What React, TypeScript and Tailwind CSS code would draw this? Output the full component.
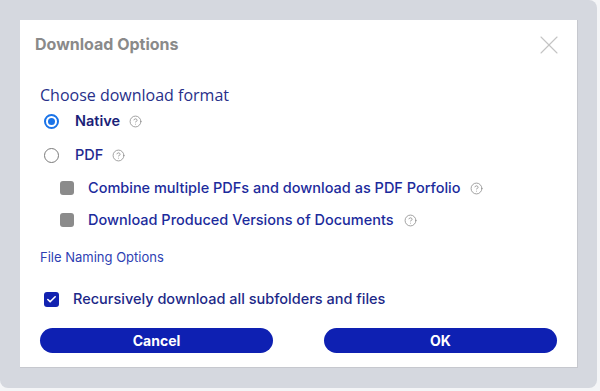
import { CircleHelp, X, Check } from 'lucide-react';

function Help({ className = '' }: { className?: string }) {
  return <CircleHelp size={13} strokeWidth={1.5} className={`text-[#8c8c8c] ${className}`} />;
}

export default function App() {
  return (
    <div className="w-[600px] h-[391px] bg-[#f4f5f7] font-['Inter',sans-serif]">
      <div className="w-[597px] h-[388px] bg-[#d5d8df] rounded-b-lg rounded-tr-lg p-[20px]">
        <div className="w-[558px] h-[348px] bg-white border-r border-b border-[#c6c8ce] flex flex-col">
          {/* header */}
          <div className="h-[48px] pl-[15px] pr-[12px] flex items-center justify-between">
            <h2 className="text-[16px] font-bold text-[#8a8a8a]">Download Options</h2>
            <X size={32} strokeWidth={0.8} className="text-[#c4c4c4] mt-[2px]" />
          </div>

          <div className="px-[20px] flex flex-col">
            <p className="mt-[18px] h-[18px] leading-[18px] text-[16px] text-[#28308a] font-['Open_Sans',sans-serif]">
              Choose download format
            </p>

            <div className="h-[34px] flex items-center pl-[4px]">
              <span className="w-[15px] h-[15px] rounded-full border-2 border-[#1a73e8] flex items-center justify-center">
                <span className="w-[7px] h-[7px] rounded-full bg-[#1a73e8]" />
              </span>
              <span className="ml-[16px] text-[14.5px] font-semibold text-[#1b1f78]">Native</span>
              <Help className="ml-[9px]" />
            </div>

            <div className="h-[34px] flex items-center pl-[4px]">
              <span className="w-[15px] h-[15px] rounded-full border border-[#7a7a7a] bg-white" />
              <span className="ml-[16px] text-[14.5px] font-medium text-[#1f2a90]">PDF</span>
              <Help className="ml-[9px]" />
            </div>

            <div className="h-[32px] flex items-center pl-[20px]">
              <span className="w-[14px] h-[14px] rounded-[3px] bg-[#8b8b8b]" />
              <span className="ml-[14px] text-[14.5px] font-medium text-[#1c2b9c]">
                Combine multiple PDFs and download as PDF Porfolio
              </span>
              <Help className="ml-[9px]" />
            </div>

            <div className="h-[32px] flex items-center pl-[20px]">
              <span className="w-[14px] h-[14px] rounded-[3px] bg-[#8b8b8b]" />
              <span className="ml-[14px] text-[14.5px] font-medium text-[#1c2b9c]">
                Download Produced Versions of Documents
              </span>
              <Help className="ml-[10px]" />
            </div>

            <a className="mt-[11px] h-[20px] leading-[20px] text-[13px] text-[#2f3fb3]">File Naming Options</a>

            <div className="mt-[20px] h-[24px] flex items-center pl-[4px]">
              <span className="w-[15px] h-[15px] rounded-[3px] bg-[#1222b0] flex items-center justify-center">
                <Check size={11} strokeWidth={3.5} className="text-white" />
              </span>
              <span className="ml-[14px] text-[14.5px] font-medium text-[#1c2888]">
                Recursively download all subfolders and files
              </span>
            </div>

            <div className="mt-[17px] flex justify-between">
              <button className="w-[233px] h-[25px] rounded-full bg-[#0e20b2] text-white text-[14px] font-bold">
                Cancel
              </button>
              <button className="w-[233px] h-[25px] rounded-full bg-[#0e20b2] text-white text-[14px] font-bold">
                OK
              </button>
            </div>
          </div>
        </div>
      </div>
    </div>
  );
}
